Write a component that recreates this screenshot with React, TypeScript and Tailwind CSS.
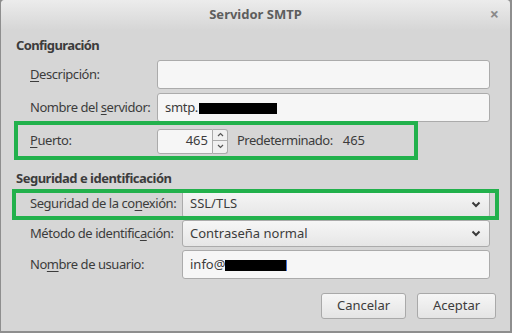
import React from "react";

const font = { fontFamily: '"Noto Sans", "Open Sans", sans-serif' };

function Chevron() {
  return (
    <svg width="10" height="7" viewBox="0 0 10 7" className="shrink-0">
      <polyline points="1.5,1.5 5,5 8.5,1.5" fill="none" stroke="#3a3a3a" strokeWidth="2" />
    </svg>
  );
}

function U({ children }: { children: React.ReactNode }) {
  return <span className="underline underline-offset-2 decoration-1">{children}</span>;
}

export default function App() {
  return (
    <div className="w-[512px] h-[333px] bg-[#8e8e8e] overflow-hidden" style={font}>
      <div className="ml-[1px] w-[509px] h-[331px] bg-[#d6d6d6] rounded-t-[4px] text-[13px] text-[#3c3c3c] flex flex-col whitespace-nowrap">
        {/* title bar */}
        <div className="relative h-[30px] shrink-0 rounded-t-[4px] bg-gradient-to-b from-[#ececec] to-[#d6d6d6] flex items-center justify-center">
          <span className="font-bold text-[#5d5d5d] text-[13px]">Servidor SMTP</span>
          <span className="absolute right-[11px] top-[2px] text-[#8a8a8a] text-[16px] font-bold">×</span>
        </div>

        <div className="mt-[8px] h-[16px] pl-[15px] flex items-center font-bold tracking-[-0.6px]">Configuración</div>

        {/* Descripción */}
        <div className="mt-[6px] h-[29px] flex items-center tracking-[-0.45px]">
          <div className="w-[156px] pl-[29px] shrink-0"><U>D</U>escripción:</div>
          <div className="w-[333px] h-[29px] rounded-[3px] border border-[#ababab] bg-[#f6f6f6]" />
        </div>

        {/* Servidor */}
        <div className="mt-[4px] h-[29px] flex items-center">
          <div className="w-[156px] pl-[29px] shrink-0 tracking-[-0.45px]">Nombre del <U>s</U>ervidor:</div>
          <div className="w-[333px] h-[29px] rounded-[3px] border border-[#ababab] bg-[#f6f6f6] flex items-center pl-[7px] tracking-[-0.3px]">
            <span>smtp.</span>
            <span className="w-[78px] h-[11px] bg-black ml-[1px] mt-[1px]" />
          </div>
        </div>

        {/* Puerto */}
        <div className="relative h-[38px] flex items-center">
          <div className="w-[156px] pl-[29px] shrink-0 tracking-[-0.45px]"><U>P</U>uerto:</div>
          <div className="w-[56px] h-[25px] rounded-l-[3px] border border-[#ababab] bg-[#f6f6f6] flex items-center justify-end pr-[4px]">465</div>
          <div className="w-[15px] h-[25px] flex flex-col">
            <div className="h-[12px] border border-l-0 border-[#ababab] rounded-tr-[3px] bg-[#f0f0f0] flex items-center justify-center">
              <svg width="7" height="5" viewBox="0 0 7 5"><polyline points="1,4 3.5,1.5 6,4" fill="none" stroke="#555" strokeWidth="1.2" /></svg>
            </div>
            <div className="h-[13px] border border-l-0 border-t-0 border-[#ababab] rounded-br-[3px] bg-[#f0f0f0] flex items-center justify-center">
              <svg width="7" height="5" viewBox="0 0 7 5"><polyline points="1,1 3.5,3.5 6,1" fill="none" stroke="#555" strokeWidth="1.2" /></svg>
            </div>
          </div>
          <span className="ml-[9px] tracking-[-0.5px]">Predeterminado:</span>
          <span className="ml-[10px]">465</span>
          <div className="absolute left-[13px] top-[-1px] w-[404px] h-[39px] border-4 border-[#22b14c]" />
        </div>

        <div className="mt-[11px] h-[16px] pl-[15px] flex items-center font-bold tracking-[-0.5px]">Seguridad e identificación</div>

        {/* Seguridad conexión */}
        <div className="relative mt-[3px] h-[28px] flex items-center">
          <div className="w-[181px] pl-[29px] shrink-0 tracking-[-0.45px]">Seguridad de la co<U>n</U>exión:</div>
          <div className="w-[308px] h-[28px] rounded-[3px] border border-[#ababab] bg-gradient-to-b from-[#f6f6f6] to-[#e6e6e6] flex items-center justify-between pl-[7px] pr-[8px]">
            <span>SSL/TLS</span>
            <Chevron />
          </div>
          <div className="absolute left-[11px] top-[-1px] w-[487px] h-[31px] border-4 border-[#22b14c]" />
        </div>

        {/* Método */}
        <div className="mt-[2px] h-[27px] flex items-center">
          <div className="w-[181px] pl-[29px] shrink-0 tracking-[-0.45px]">Método de identific<U>a</U>ción:</div>
          <div className="w-[308px] h-[27px] rounded-[3px] border border-[#ababab] bg-gradient-to-b from-[#f6f6f6] to-[#e6e6e6] flex items-center justify-between pl-[7px] pr-[8px]">
            <span>Contraseña normal</span>
            <Chevron />
          </div>
        </div>

        {/* Usuario */}
        <div className="mt-[3px] h-[29px] flex items-center">
          <div className="w-[181px] pl-[29px] shrink-0 tracking-[-0.45px]">No<U>m</U>bre de usuario:</div>
          <div className="w-[308px] h-[29px] rounded-[3px] border border-[#ababab] bg-[#f6f6f6] flex items-center pl-[7px]">
            <span>info@</span>
            <span className="w-[62px] h-[11px] bg-black mt-[1px] border-r border-[#3b6fd6]" />
          </div>
        </div>

        {/* buttons */}
        <div className="mt-[14px] flex justify-end gap-[11px] pr-[14px]">
          <button className="w-[85px] h-[26px] rounded-[3px] border border-[#a9a9a9] bg-gradient-to-b from-[#f6f6f6] to-[#e4e4e4] text-[#3c3c3c]">Cancelar</button>
          <button className="w-[79px] h-[26px] rounded-[3px] border border-[#a9a9a9] bg-gradient-to-b from-[#f6f6f6] to-[#e4e4e4] text-[#3c3c3c]">Aceptar</button>
        </div>
      </div>
    </div>
  );
}
